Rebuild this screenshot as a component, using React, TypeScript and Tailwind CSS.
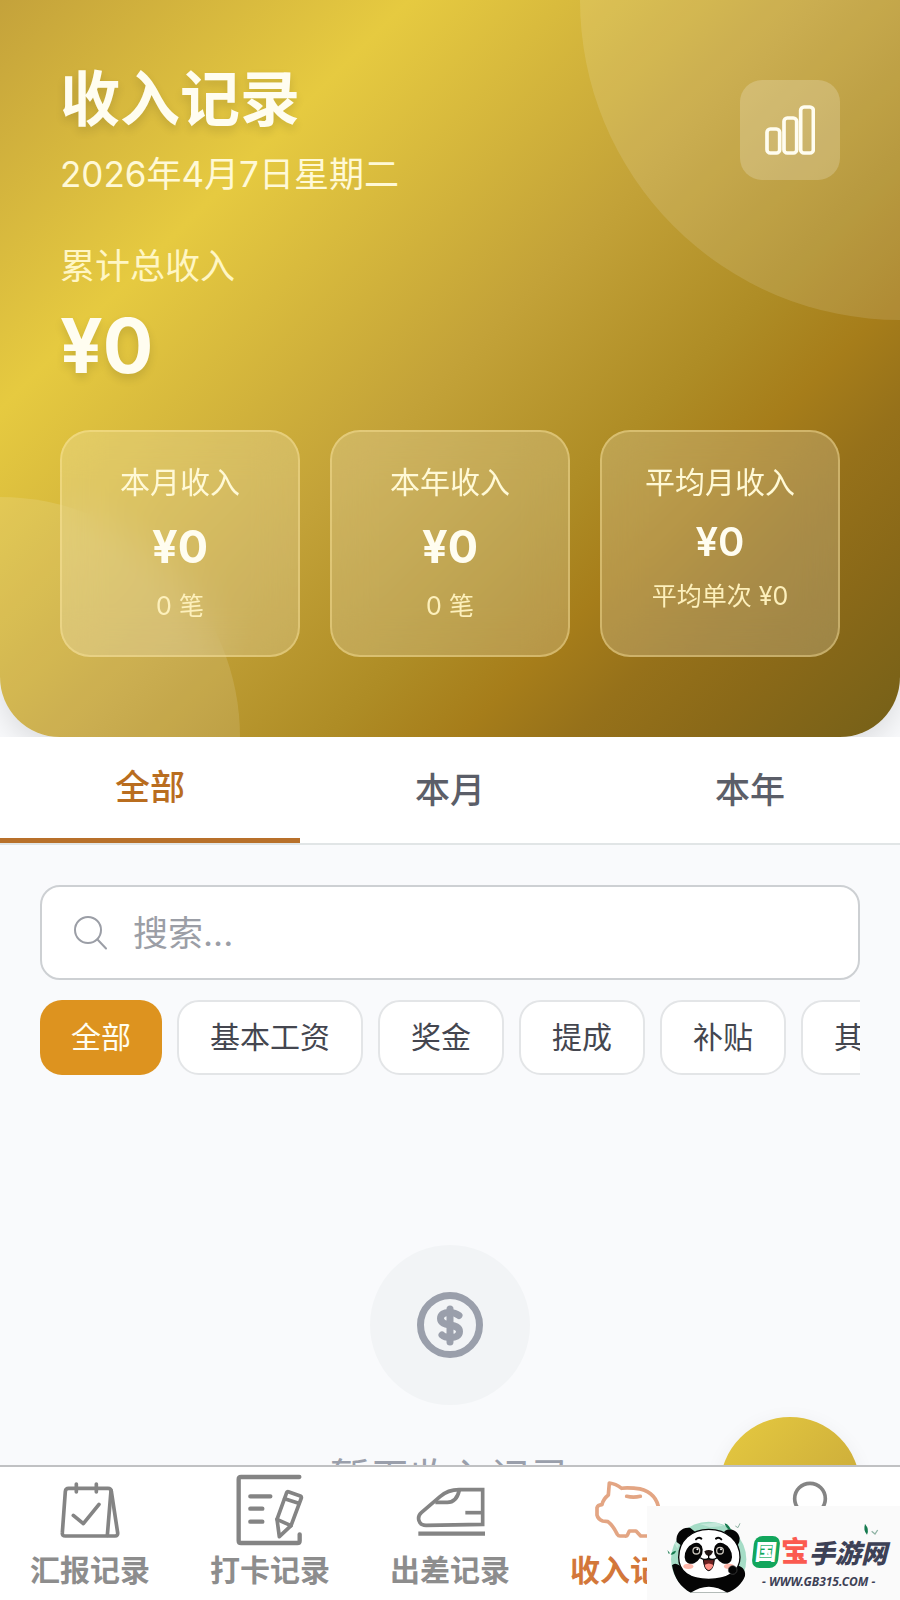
import type { ReactNode } from 'react';

interface Stat {
    label: string;
    value: string;
    note: string;
    compact?: boolean;
}

const stats: Stat[] = [
    { label: '本月收入', value: '¥0', note: '0 笔' },
    { label: '本年收入', value: '¥0', note: '0 笔' },
    { label: '平均月收入', value: '¥0', note: '平均单次 ¥0', compact: true },
];

const tabs = ['全部', '本月', '本年'];
const categories = ['全部', '基本工资', '奖金', '提成', '补贴', '其他'];

function ChartIcon() {
    return (
        <svg viewBox="0 0 150 150" className="size-[50px]" fill="none" stroke="currentColor" strokeWidth="11">
            <rect x="6" y="72" width="38" height="72" rx="10" />
            <rect x="57" y="39" width="38" height="105" rx="10" />
            <rect x="107" y="6" width="38" height="138" rx="10" />
        </svg>
    );
}

function SearchIcon() {
    return (
        <svg viewBox="0 0 34 34" className="size-[34px]" fill="none" stroke="currentColor" strokeWidth="2" strokeLinecap="round">
            <circle cx="15" cy="14" r="13" />
            <path d="M24.5 23.5 33 32.5" />
        </svg>
    );
}

function DollarIcon() {
    return (
        <svg viewBox="0 0 66 66" className="size-[66px]" fill="none" stroke="currentColor" strokeLinecap="round" strokeLinejoin="round">
            <circle cx="33" cy="33" r="29.5" strokeWidth="7" />
            <path strokeWidth="7" d="M33 17V50" />
            <path
                strokeWidth="7"
                d="M42 23.5C39 21 35 20.500 32 20.500C27 20.500 23.500 22.500 23.500 26.500C23.500 31 28 32 33 33C38 34 42.500 35 42.500 39.500C42.500 44 38 45.500 34 45.500C30 45.500 27 45 25 43"
            />
        </svg>
    );
}

interface NavIconProps {
    children: ReactNode;
}

function NavIcon({ children }: NavIconProps) {
    return (
        <svg
            viewBox="0 0 216 216"
            className="size-[72px]"
            fill="none"
            stroke="currentColor"
            strokeWidth="11"
            strokeLinecap="round"
            strokeLinejoin="round"
        >
            {children}
        </svg>
    );
}

const navItems = [
    {
        label: '汇报记录',
        icon: (
            <NavIcon>
                <path d="M44 43H162Q171 43 172 52L191 176Q192 186 183 186H34Q24 186 25 176L34 52Q35 43 44 43Z" />
                <path d="M171 50 160 184" />
                <path d="M67 30V54M127 30V54" />
                <path d="M58 124 88 149 135 91" />
            </NavIcon>
        ),
    },
    {
        label: '打卡记录',
        icon: (
            <NavIcon>
                <path strokeWidth="13" d="M196 9H21Q14 9 14 16V200Q14 207 21 207H190Q197 207 197 200V181" />
                <path strokeWidth="13" d="M49 67H109M49 104H85M49 143H85" />
                <path d="M163 53 199 66Q203 68 202 72L171 155 136 188 129 136 158 56Q159 52 163 53Z" />
                <path d="M152 74 194 88M129 136 171 155" />
            </NavIcon>
        ),
    },
    {
        label: '出差记录',
        icon: (
            <NavIcon>
                <g strokeLinecap="butt" strokeLinejoin="miter">
                    <path d="M206 47V151L36 154C12 154 8 128 22 116L78 68C95 53 110 47 135 47Z" />
                    <path d="M64 85H100Q128 85 136 48" />
                    <path d="M154 116H206" />
                    <path strokeWidth="13" d="M13 179H213" />
                </g>
            </NavIcon>
        ),
    },
    {
        label: '收入记录',
        active: true,
        icon: (
            <NavIcon>
                <path d="M46 27Q65 29 83 43C96 40 112 42 125 43C160 45 186 66 193 97C198 125 188 151 174 164V178Q174 186 165 186H140L126 171H106L100 184Q98 187 92 186H78Q73 186 70 181C63 167 52 150 42 143L26 141Q12 136 9 123V101Q11 93 24 92C27 77 34 70 43 63Z" />
                <path d="M98 67Q118 72 139 67" />
            </NavIcon>
        ),
    },
    {
        label: '我的',
        icon: (
            <NavIcon>
                <circle cx="108" cy="74" r="46" />
                <path d="M20 196C24 150 60 132 108 132C156 132 192 150 196 196Z" />
            </NavIcon>
        ),
    },
];

function Header() {
    return (
        <header className="relative shrink-0 overflow-hidden rounded-b-[60px] bg-[linear-gradient(135deg,#c4a23b_0%,#e6ca40_25%,#c3a238_50%,#ae8c25_65%,#a67d1a_73%,#96711a_80%,#8a6918_88%,#756018_100%)] px-15 pt-15 pb-20 text-[#fffdf0] shadow-[0_10px_30px_rgba(0,0,0,0.12)]">
            <div className="absolute -top-80 -right-80 size-160 rounded-full bg-white/12" />
            <div className="absolute -bottom-60 -left-60 size-120 rounded-full bg-white/12" />
            <div className="relative flex items-center justify-between">
                <div>
                    <h1 className="text-[60px] leading-[78px] font-bold [text-shadow:0_5px_10px_rgba(0,0,0,0.12)]">收入记录</h1>
                    <p className="mt-[10px] text-[35px] leading-[52px] text-[#fff9d6]">2026年4月7日星期二</p>
                </div>
                <button type="button" aria-label="统计" className="flex size-25 items-center justify-center rounded-[22px] bg-white/20">
                    <ChartIcon />
                </button>
            </div>
            <p className="relative mt-10 text-[35px] leading-[52px] text-[#fff6c4]">累计总收入</p>
            <p className="relative mt-2 text-[75px] leading-[92px] font-bold [text-shadow:0_5px_10px_rgba(0,0,0,0.12)]">¥0</p>
            <div className="relative mt-[38px] grid grid-cols-3 gap-[30px]">
                {stats.map((stat) => (
                    <div key={stat.label} className="rounded-[30px] border-2 border-[#ffe9a0]/40 bg-white/20 pt-7 pb-[30px] text-center backdrop-blur-[20px]">
                        <p className="text-[30px] leading-[45px] text-[#fff9d6]">{stat.label}</p>
                        <p className={stat.compact ? 'mt-[10px] text-[40px] leading-[54px] font-semibold' : 'mt-[10px] text-[45px] leading-[64px] font-bold'}>
                            {stat.value}
                        </p>
                        <p className="mt-2 text-[25px] leading-[38px] text-[#fdf0bc]">{stat.note}</p>
                    </div>
                ))}
            </div>
        </header>
    );
}

function Panda() {
    return (
        <svg viewBox="0 0 270 270" className="size-[90px] shrink-0">
            <clipPath id="badge-clip">
                <rect width="270" height="248" />
            </clipPath>
            <g clipPath="url(#badge-clip)">
                <circle cx="146" cy="148" r="113" fill="#a5dcc6" />
                <path d="M120 42 150 52 190 48 172 38ZM52 116 62 90 44 100Z" fill="#c4e8da" />
                <path d="M50 96C46 70 66 50 91 54L106 66 66 108ZM192 66C206 48 236 62 239 84Q240 98 232 108Z" fill="#050505" />
                <path d="M36 166Q44 156 58 166L84 196 216 190 206 180Q206 166 222 166C246 166 258 180 255 198C246 222 226 240 202 248H92C62 232 42 204 36 166Z" fill="#050505" />
                <path d="M92 248Q146 212 202 248Z" fill="#fff" />
                <path d="M56 142C56 92 94 58 146 58C202 58 240 94 240 142C240 186 202 208 146 208C90 208 56 186 56 142Z" fill="#fff" stroke="#050505" strokeWidth="4" />
                <ellipse cx="101" cy="130" rx="24" ry="34" transform="rotate(32 101 130)" fill="#050505" />
                <ellipse cx="189" cy="130" rx="24" ry="34" transform="rotate(-32 189 130)" fill="#050505" />
                <g fill="#050505" stroke="#c9c4bb" strokeWidth="4">
                    <circle cx="109" cy="122" r="10" />
                    <circle cx="180" cy="122" r="10" />
                </g>
                <circle cx="112" cy="118" r="3" fill="#fff" />
                <circle cx="183" cy="118" r="3" fill="#fff" />
                <path d="M108 88Q116 80 124 86M168 86Q176 80 184 88" fill="none" stroke="#050505" strokeWidth="6" strokeLinecap="round" />
                <ellipse cx="85" cy="169" rx="15" ry="8" fill="#ffb7aa" />
                <ellipse cx="207" cy="169" rx="15" ry="8" fill="#ffb7aa" />
                <path d="M133 124Q146 116 159 124Q156 136 146 138Q136 136 133 124Z" fill="#201413" />
                <path d="M146 136V146M122 144Q134 152 146 145Q158 152 170 144" fill="none" stroke="#050505" strokeWidth="4" strokeLinecap="round" />
                <path d="M130 149H163Q160 180 146 182Q133 180 130 149Z" fill="#6b2020" stroke="#050505" strokeWidth="3" />
                <path d="M134 165Q146 156 160 165Q156 179 146 180Q137 178 134 165Z" fill="#ff8f86" />
                <circle cx="218" cy="180" r="13" fill="#050505" stroke="#4a4a4a" strokeWidth="2" />
            </g>
            <path d="M194 40Q208 44 214 60Q198 58 194 40ZM32 134Q36 124 48 122Q46 134 32 134ZM22 120 30 130 26 131Z" fill="#157a4e" />
            <path d="M226 48 234 53 240 40" fill="none" stroke="#8fb3a4" strokeWidth="3" />
        </svg>
    );
}

function SiteBadge() {
    return (
        <a href="#site" aria-label="国宝手游网" className="absolute right-0 bottom-0 flex h-[94px] w-[253px] items-start bg-[#fafafa] pt-1 pl-[13px] font-bold">
            <Panda />
            <div className="relative flex flex-col pt-[26px]">
                <div className="flex items-center italic">
                    <span className="mr-[2px] ml-[3px] flex h-8 w-[26px] -skew-x-6 items-center justify-center rounded-[8px] bg-[#12a65c] text-[22px] leading-8 font-black text-white not-italic">
                        国
                    </span>
                    <span className="text-[28px] leading-8 font-black text-[#fb5a50] not-italic">宝</span>
                    <span className="pt-1 text-[26px] leading-7 font-black text-[#3d4156]">手游网</span>
                </div>
                <span className="pt-1 pl-3 font-['Noto_Sans'] text-[12px] leading-[20px] text-[#3d4156] italic">- WWW.GB315.COM -</span>
                <svg viewBox="0 0 48 36" className="absolute top-[14px] right-2 h-3 w-4">
                    <path d="M6 0Q20 16 12 32Q0 20 6 0Z" fill="#157a4e" />
                    <path d="M26 22 36 30 44 18" fill="none" stroke="#8fb3a4" strokeWidth="4" />
                </svg>
            </div>
        </a>
    );
}

function App() {
    return (
        <div className="relative flex h-screen flex-col overflow-hidden bg-[#f9fafc] font-['Inter','Noto_Sans_CJK_SC',sans-serif]">
            <Header />

            {/* Period tabs */}
            <nav className="relative flex shrink-0 border-b-2 border-[#e1e5e6] bg-white">
                {tabs.map((tab, index) => (
                    <button
                        key={tab}
                        type="button"
                        className={
                            index === 0
                                ? 'h-[106px] flex-1 border-b-[5px] border-[#b8702a] text-[35px] font-medium text-[#b96d1f]'
                                : 'h-[106px] flex-1 text-[35px] font-medium text-[#5b5e68]'
                        }
                    >
                        {tab}
                    </button>
                ))}
            </nav>

            <main className="relative flex-1 overflow-hidden px-10 pt-10">
                <label className="flex h-[95px] items-center gap-[26px] rounded-[20px] border-2 border-[#cdd0d3] bg-white px-[31px] text-[#9b9ea6]">
                    <SearchIcon />
                    <input
                        type="text"
                        aria-label="搜索"
                        placeholder="搜索..."
                        className="min-w-0 flex-1 text-[35px] leading-[52px] outline-none placeholder:text-[#9b9ea6]"
                    />
                </label>

                <div className="mt-5 flex gap-[15px] overflow-hidden">
                    {categories.map((category, index) => (
                        <button
                            key={category}
                            type="button"
                            className={
                                index === 0
                                    ? 'h-[75px] shrink-0 rounded-[22px] bg-[#dd931f] px-[31px] text-[30px] text-[#fffdf0]'
                                    : 'h-[75px] shrink-0 rounded-[22px] border-2 border-[#e3e5e7] bg-white px-[31px] text-[30px] text-[#44464f]'
                            }
                        >
                            {category}
                        </button>
                    ))}
                </div>

                {/* Empty state */}
                <div className="mt-[170px] flex flex-col items-center text-[#9a9fab]">
                    <div className="flex size-40 items-center justify-center rounded-full bg-[#f2f4f6]">
                        <DollarIcon />
                    </div>
                    <p className="mt-[43px] text-[40px] leading-[60px]">暂无收入记录</p>
                </div>

                <button
                    type="button"
                    aria-label="添加"
                    className="absolute right-10 -bottom-[92px] size-35 rounded-full bg-[linear-gradient(135deg,#e6ca40,#c3a238)] shadow-[0_4px_20px_rgba(0,0,0,0.06)]"
                />
            </main>

            <nav className="flex shrink-0 border-t-2 border-[#c0c1c3] bg-white pt-[7px] pb-[7px]">
                {navItems.map((item) => (
                    <a key={item.label} href="#nav" className="flex flex-1 flex-col items-center gap-[2px]">
                        <span className={item.active ? 'text-[#e3a583]' : 'text-[#848484]'}>{item.icon}</span>
                        <span className={item.active ? 'text-[30px] leading-[45px] font-bold text-[#d3773a]' : 'text-[30px] leading-[45px] font-bold text-[#8d8d8d]'}>
                            {item.label}
                        </span>
                    </a>
                ))}
            </nav>

            <SiteBadge />
        </div>
    );
}

export default App;
